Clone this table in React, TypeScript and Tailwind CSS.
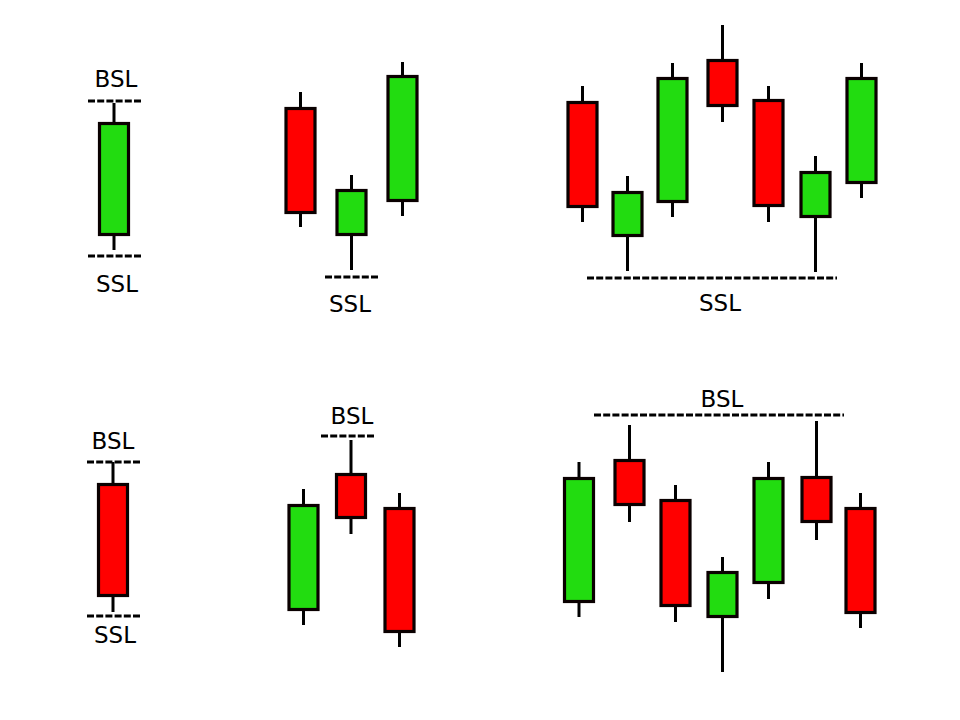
import React from "react"

type Candle = { cx: number; o: number; c: number; hi: number; lo: number; up: boolean }
type Dash = { y: number; x1: number; x2: number }
type Label = { text: string; x: number; y: number }
type Panel = { x: number; y: number; w: number; h: number; candles: Candle[]; dashes: Dash[]; labels: Label[] }

const GREEN = "#22dc10"
const RED = "#ff0000"

// coordinates are page pixels; each panel's viewBox starts at its own corner
const panels: Panel[] = [
  {
    x: 0, y: 0, w: 200, h: 360,
    candles: [{ cx: 114, o: 122, c: 236, hi: 103, lo: 250, up: true }],
    dashes: [
      { y: 101, x1: 88, x2: 142 },
      { y: 256, x1: 88, x2: 142 },
    ],
    labels: [
      { text: "BSL", x: 116, y: 87 },
      { text: "SSL", x: 117, y: 292 },
    ],
  },
  {
    x: 200, y: 0, w: 270, h: 360,
    candles: [
      { cx: 300.5, o: 107, c: 214, hi: 92, lo: 227, up: false },
      { cx: 351.5, o: 189, c: 236, hi: 175, lo: 270, up: true },
      { cx: 402.5, o: 75, c: 202, hi: 62, lo: 216, up: true },
    ],
    dashes: [{ y: 277, x1: 325, x2: 378 }],
    labels: [{ text: "SSL", x: 350, y: 312 }],
  },
  {
    x: 470, y: 0, w: 490, h: 360,
    candles: [
      { cx: 582.5, o: 101, c: 208, hi: 86, lo: 222, up: false },
      { cx: 627.5, o: 191, c: 237, hi: 176, lo: 271, up: true },
      { cx: 672.5, o: 77, c: 203, hi: 63, lo: 217, up: true },
      { cx: 722.5, o: 59, c: 107, hi: 25, lo: 122, up: false },
      { cx: 768.5, o: 99, c: 207, hi: 86, lo: 222, up: false },
      { cx: 815.5, o: 171, c: 218, hi: 156, lo: 272, up: true },
      { cx: 861.5, o: 77, c: 184, hi: 63, lo: 198, up: true },
    ],
    dashes: [{ y: 278, x1: 587, x2: 837 }],
    labels: [{ text: "SSL", x: 720, y: 311 }],
  },
  {
    x: 0, y: 360, w: 200, h: 360,
    candles: [{ cx: 113, o: 483, c: 597, hi: 462, lo: 612, up: false }],
    dashes: [
      { y: 462, x1: 87, x2: 140 },
      { y: 616, x1: 87, x2: 140 },
    ],
    labels: [
      { text: "BSL", x: 113, y: 449 },
      { text: "SSL", x: 115, y: 643 },
    ],
  },
  {
    x: 200, y: 360, w: 270, h: 360,
    candles: [
      { cx: 303.5, o: 504, c: 611, hi: 489, lo: 625, up: true },
      { cx: 351, o: 473, c: 519, hi: 440, lo: 534, up: false },
      { cx: 399.5, o: 507, c: 633, hi: 493, lo: 647, up: false },
    ],
    dashes: [{ y: 436, x1: 321, x2: 376 }],
    labels: [{ text: "BSL", x: 352, y: 424 }],
  },
  {
    x: 470, y: 360, w: 490, h: 360,
    candles: [
      { cx: 579, o: 477, c: 603, hi: 462, lo: 617, up: true },
      { cx: 629.5, o: 459, c: 506, hi: 425, lo: 522, up: false },
      { cx: 675.5, o: 499, c: 607, hi: 485, lo: 622, up: false },
      { cx: 722.5, o: 571, c: 618, hi: 557, lo: 672, up: true },
      { cx: 768.5, o: 477, c: 584, hi: 462, lo: 599, up: true },
      { cx: 816.5, o: 476, c: 523, hi: 421, lo: 540, up: false },
      { cx: 860.5, o: 507, c: 614, hi: 493, lo: 628, up: false },
    ],
    dashes: [{ y: 415, x1: 594, x2: 844 }],
    labels: [{ text: "BSL", x: 722, y: 407 }],
  },
]

function CandleMark({ cx, o, c, hi, lo, up }: Candle) {
  return (
    <g>
      <line x1={cx} x2={cx} y1={hi} y2={lo} stroke="#000" strokeWidth={3} />
      <rect
        x={cx - 14.5}
        y={o + 1.5}
        width={29}
        height={c - o - 3}
        fill={up ? GREEN : RED}
        stroke="#0a0000"
        strokeWidth={3.2}
      />
    </g>
  )
}

function ChartPanel({ panel }: { panel: Panel }) {
  return (
    <svg
      width={panel.w}
      height={panel.h}
      viewBox={`${panel.x} ${panel.y} ${panel.w} ${panel.h}`}
      className="block"
    >
      {panel.dashes.map((d, i) => (
        <line key={i} x1={d.x1} x2={d.x2} y1={d.y} y2={d.y} stroke="#000" strokeWidth={3} strokeDasharray="7 2.2" />
      ))}
      {panel.candles.map((c, i) => (
        <CandleMark key={i} {...c} />
      ))}
      {panel.labels.map((l, i) => (
        <text
          key={i}
          x={l.x}
          y={l.y}
          textAnchor="middle"
          fontSize={23}
          fill="#000"
          style={{ fontFamily: '"DejaVu Sans", Verdana, sans-serif' }}
        >
          {l.text}
        </text>
      ))}
    </svg>
  )
}

export default function App() {
  return (
    <div className="h-[720px] w-[960px] overflow-hidden bg-white">
      <div className="grid grid-cols-[200px_270px_490px] grid-rows-[360px_360px]">
        {panels.map((p, i) => (
          <ChartPanel key={i} panel={p} />
        ))}
      </div>
    </div>
  )
}
